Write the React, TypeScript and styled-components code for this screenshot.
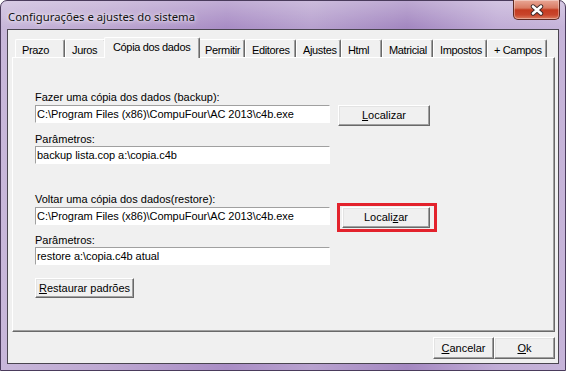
import styled, { createGlobalStyle } from "styled-components";

const GlobalStyle = createGlobalStyle`
  html, body {
    margin: 0;
    padding: 0;
    background: #ffffff;
  }
  body {
    font-family: "Liberation Sans", Arial, sans-serif;
    font-size: 11px;
    color: #000;
  }
`;

const Window = styled.div`
  width: 566px;
  height: 371px;
  box-sizing: border-box;
  display: flex;
  flex-direction: column;
  padding: 0 6px 6px;
  border: 1px solid #4a3b5c;
  border-radius: 7px 7px 0 0;
  background:
    linear-gradient(180deg, rgba(255, 255, 255, 0.28), rgba(255, 255, 255, 0) 26px),
    linear-gradient(90deg, #c8b7da 0%, #bea9d2 18%, #a98dc5 40%, #b8a2cf 55%, #a488c1 72%, #c1add6 88%, #c6b4d9 100%);
`;

const TitleBar = styled.div`
  height: 28px;
  margin: 0 -6px;
  padding: 0 5px 0 7px;
  display: flex;
  align-items: flex-start;
  justify-content: space-between;
`;

const Title = styled.span`
  margin-top: 8px;
  font-family: "Noto Sans", "Open Sans", sans-serif;
  font-size: 11.3px;
  line-height: 15px;
  color: #111;
  text-shadow: 0 0 6px rgba(255, 255, 255, 0.9), 0 0 3px rgba(255, 255, 255, 0.8);
`;

const CloseButton = styled.div`
  margin-top: -1px;
  width: 47px;
  height: 20px;
  box-sizing: border-box;
  display: flex;
  align-items: center;
  justify-content: center;
  border: 1px solid #5e2a22;
  border-top: none;
  border-radius: 0 0 5px 5px;
  background: linear-gradient(180deg, #e9a796 0%, #d97b63 42%, #c43b20 52%, #c9452b 78%, #dc7c5f 100%);
  box-shadow: inset 0 0 0 1px rgba(255, 255, 255, 0.35);
`;

const Client = styled.div`
  flex: 1;
  display: flex;
  flex-direction: column;
  padding: 7px 3px 0 4px;
  border: 1px solid #4a4550;
  background: #f0f0f0;
`;

const TabStrip = styled.div`
  height: 20px;
  display: flex;
  align-items: flex-end;
  padding-left: 3px;
`;

const Tab = styled.div<{ $w: number; $active?: boolean }>`
  width: ${(p) => p.$w + (p.$active ? 4 : 0)}px;
  height: ${(p) => (p.$active ? 21 : 18)}px;
  margin: ${(p) => (p.$active ? "0 -2px -1px" : "0")};
  position: relative;
  z-index: ${(p) => (p.$active ? 1 : 0)};
  box-sizing: border-box;
  padding: ${(p) => (p.$active ? "3px 0 0 8px" : "4px 0 0 6px")};
  border-top: 1px solid #ffffff;
  border-left: 1px solid #ffffff;
  border-right: 1px solid #696969;
  border-radius: 2px 2px 0 0;
  box-shadow: inset -1px 0 #a0a0a0;
  background: #f0f0f0;
  line-height: 13px;
  letter-spacing: -0.35px;
  white-space: nowrap;
  overflow: hidden;
`;

const Panel = styled.div`
  height: 275px;
  box-sizing: border-box;
  display: flex;
  flex-direction: column;
  align-items: flex-start;
  padding: 33px 0 0 22px;
  border-top: 1px solid #ffffff;
  border-left: 1px solid #ffffff;
  border-right: 1px solid #696969;
  border-bottom: 1px solid #696969;
  box-shadow: inset -1px -1px #a0a0a0;
`;

const FieldLabel = styled.div<{ $top: number }>`
  margin-top: ${(p) => p.$top}px;
  line-height: 13px;
  white-space: nowrap;
`;

const FieldRow = styled.div<{ $top: number }>`
  margin-top: ${(p) => p.$top}px;
  display: flex;
  align-items: flex-start;
  gap: 8px;
`;

const TextBox = styled.input`
  width: 295px;
  height: 18px;
  box-sizing: border-box;
  margin: 0;
  padding: 0 0 0 1px;
  border: 1px solid;
  border-color: #a0a0a0 #ffffff #ffffff #a0a0a0;
  background: #ffffff;
  font-family: "Liberation Sans", Arial, sans-serif;
  font-size: 11px;
  letter-spacing: -0.05px;
  color: #000;
  outline: none;
`;

const Button = styled.div<{ $w: number; $h?: number }>`
  width: ${(p) => p.$w}px;
  height: ${(p) => p.$h ?? 21}px;
  box-sizing: border-box;
  display: flex;
  align-items: center;
  justify-content: center;
  border: 1px solid;
  border-color: #ffffff #696969 #696969 #ffffff;
  box-shadow: inset -1px -1px #a0a0a0, inset 1px 1px #e3e3e3;
  background: #f0f0f0;
  line-height: 13px;
  white-space: nowrap;
`;

const Highlight = styled.div`
  position: relative;
  margin-left: 4px;

  &::after {
    content: "";
    position: absolute;
    left: -5px;
    top: -4px;
    right: -7px;
    bottom: -4px;
    border: 3px solid #e3222c;
    pointer-events: none;
  }
`;

const U = styled.span`
  text-decoration: underline;
  text-underline-offset: 1px;
`;

const Footer = styled.div`
  margin-top: 5px;
  display: flex;
  justify-content: flex-end;
`;

const tabs = [
  { label: "Prazo", w: 50 },
  { label: "Juros", w: 41 },
  { label: "Cópia dos dados", w: 92, active: true },
  { label: "Permitir", w: 47 },
  { label: "Editores", w: 51 },
  { label: "Ajustes", w: 45 },
  { label: "Html", w: 41 },
  { label: "Matricial", w: 51 },
  { label: "Impostos", w: 54 },
  { label: "+ Campos", w: 60 },
];

const CloseGlyph = () => (
  <svg width="14" height="12" viewBox="0 0 14 12">
    <path d="M3 2.5 L11 9.5 M11 2.5 L3 9.5" stroke="#3b2a2a" strokeWidth="4.4" strokeLinecap="round" />
    <path d="M3 2.5 L11 9.5 M11 2.5 L3 9.5" stroke="#ffffff" strokeWidth="2.6" strokeLinecap="round" />
  </svg>
);

export default function App() {
  return (
    <>
      <GlobalStyle />
      <Window>
        <TitleBar>
          <Title>Configurações e ajustes do sistema</Title>
          <CloseButton>
            <CloseGlyph />
          </CloseButton>
        </TitleBar>
        <Client>
          <TabStrip>
            {tabs.map((t) => (
              <Tab key={t.label} $w={t.w} $active={t.active}>
                {t.label}
              </Tab>
            ))}
          </TabStrip>
          <Panel>
            <FieldLabel $top={0}>Fazer uma cópia dos dados (backup):</FieldLabel>
            <FieldRow $top={1}>
              <TextBox readOnly defaultValue="C:\Program Files (x86)\CompuFour\AC 2013\c4b.exe" />
              <Button $w={92}>
                <span>
                  <U>L</U>ocalizar
                </span>
              </Button>
            </FieldRow>
            <FieldLabel $top={7}>Parâmetros:</FieldLabel>
            <FieldRow $top={0}>
              <TextBox readOnly defaultValue="backup lista.cop a:\copia.c4b" />
            </FieldRow>
            <FieldLabel $top={29}>Voltar uma cópia dos dados(restore):</FieldLabel>
            <FieldRow $top={1}>
              <TextBox readOnly defaultValue="C:\Program Files (x86)\CompuFour\AC 2013\c4b.exe" />
              <Highlight>
                <Button $w={88}>
                  <span>
                    Locali<U>z</U>ar
                  </span>
                </Button>
              </Highlight>
            </FieldRow>
            <FieldLabel $top={6}>Parâmetros:</FieldLabel>
            <FieldRow $top={0}>
              <TextBox readOnly defaultValue="restore a:\copia.c4b atual" />
            </FieldRow>
            <FieldRow $top={13}>
              <Button $w={99} $h={20}>
                <span>
                  <U>R</U>estaurar padrões
                </span>
              </Button>
            </FieldRow>
          </Panel>
          <Footer>
            <Button $w={61} $h={22}>
              <span>
                <U>C</U>ancelar
              </span>
            </Button>
            <Button $w={61} $h={22}>
              <span>
                <U>O</U>k
              </span>
            </Button>
          </Footer>
        </Client>
      </Window>
    </>
  );
}
